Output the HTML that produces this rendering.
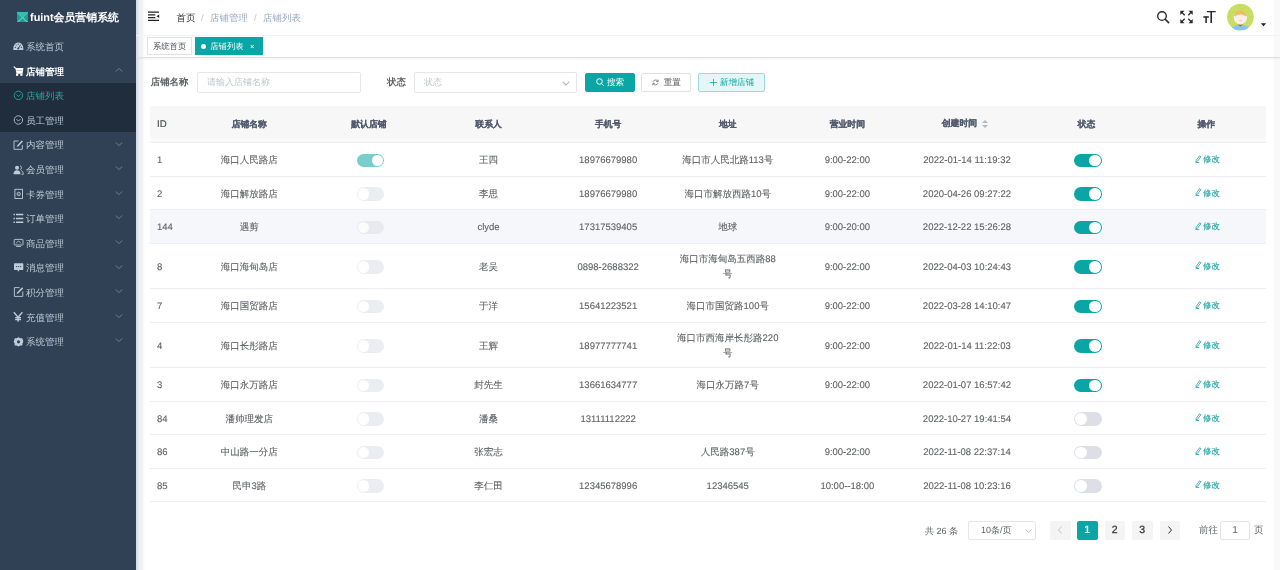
<!DOCTYPE html>
<html><head><meta charset="utf-8">
<style>
*{box-sizing:border-box;margin:0;padding:0}
body{will-change:transform}
html,body{width:1280px;height:570px;overflow:hidden;background:#fff;text-rendering:geometricPrecision;font-family:"Liberation Sans",sans-serif;font-size:9.5px;color:#606266}
.abs{position:absolute}
#side{position:absolute;left:0;top:0;width:136px;height:570px;background:#304156}
#logo{position:absolute;left:17px;top:10.5px;height:15px;color:#fff;font-weight:bold;font-size:10.9px;line-height:15px;white-space:nowrap}
#logo i{display:inline-block;width:11px;height:10.5px;background:#2aa8a0;vertical-align:-1.5px;margin-right:2px;position:relative;overflow:hidden}
.mi{position:absolute;left:0;width:136px;height:24.6px;line-height:24.6px;font-size:9.5px;white-space:nowrap}
.mi .ic{position:absolute;left:13px;top:7.3px;width:10px;height:10px;line-height:0}
.mi .tx{position:absolute;left:26px}
.mi .ar{position:absolute;left:115px;top:9px;width:8px;height:4px}
#sub{position:absolute;left:0;top:83px;width:136px;height:49px;background:#1f2d3d}
#shadow{position:absolute;left:136px;top:0;width:9px;height:570px;background:linear-gradient(90deg,#d3dbe4 0,#dfe4ea 2px,#eef0f3 3px,#f1f2f4 6px,#fff 9px)}
#nav{position:absolute;left:136px;top:0;width:1144px;height:36px;border-bottom:1px solid #f3f3f3}
#tags{position:absolute;left:136px;top:36px;width:1144px;height:22px;border-bottom:1px solid #e0e0e0;box-shadow:0 1px 2px rgba(0,0,0,.05)}
.tag{position:absolute;top:1px;height:18px;line-height:16px;border:1px solid #d8dce5;background:#fff;color:#495060;font-size:8.3px;white-space:nowrap}
.tag.on{background:#0aa6a6;border-color:#0aa6a6;color:#fff}
.tag.on .dot{display:inline-block;width:5px;height:5px;border-radius:50%;background:#fff;margin-right:4px;vertical-align:0.5px}
.bc{position:absolute;top:12.5px;line-height:12px;font-size:9.5px;white-space:nowrap}
.c{position:absolute;display:flex;align-items:center;justify-content:center;text-align:center;line-height:15px;white-space:nowrap;color:#606266}
.c .h.id{font-size:9.7px;font-weight:normal;color:#454a55}
.c .t{position:relative;top:0.8px;-webkit-text-stroke:0.1px currentColor}
.c .h{font-weight:bold;color:#515a6e;font-size:8.8px;-webkit-text-stroke:0.15px currentColor}
.sw{display:inline-block;position:relative;width:27.5px;height:13.5px;border-radius:7px;background:#dcdfe6;vertical-align:middle;left:1.5px}
.sw b{position:absolute;left:1px;top:1px;width:11.5px;height:11.5px;border-radius:50%;background:#fff}
.sw.on{background:#0aa6a6}
.sw.on b{left:15px}
.sw.dis{opacity:.55}
.ed{color:#1e9f9f;font-size:8.4px;position:relative;top:-0.6px;left:1px}
.sort{display:inline-block;position:relative;width:7px;height:9px;margin-left:5px;margin-right:3px;vertical-align:middle;top:-0.5px}
.sort i{position:absolute;left:0;width:0;height:0;border-left:3px solid transparent;border-right:3px solid transparent}
.sort .up{top:0;border-bottom:3.5px solid #b4b8bf}
.sort .dn{top:5px;border-top:3.5px solid #b4b8bf}
.lbl{position:absolute;font-weight:bold;color:#606266;line-height:12px;white-space:nowrap;font-size:9.4px}
.inp{position:absolute;height:21px;border:1px solid #e6e6e6;border-radius:2px;background:#fff;color:#c0c4cc;line-height:19px;padding-left:9px;font-size:9px;white-space:nowrap}
.btn{position:absolute;height:19px;border-radius:2px;line-height:17px;text-align:center;font-size:8.6px;white-space:nowrap;border:1px solid #e2e2e2;color:#606266;background:#fff}
.pg{position:absolute;top:521px;height:19px;width:20.5px;background:#f4f4f5;border-radius:2px;text-align:center;line-height:18px;font-weight:normal;color:#303133;font-size:10.5px;-webkit-text-stroke:0.25px #303133}
</style></head><body>
<div id="side">
  <div id="logo"><i><svg width="11" height="11" viewBox="0 0 11 11" style="position:absolute;left:0;top:0"><rect width="11" height="11" fill="#1f9e98"/><path d="M0 0L11 11M11 0L0 11" stroke="#5ccfc3" stroke-width="1.2"/><path d="M0 0h11L5.5 5.5z" fill="#3ab9b0"/></svg></i>fuint会员营销系统</div>
  <div id="sub"></div>
<svg class="abs" style="left:0;top:0" width="136" height="360" viewBox="0 0 136 360">
<!-- dashboard -->
<path d="M13.3 50.1C13 45.2 15.4 42.5 18.3 42.5S23.6 45.2 23.3 50.1Z" fill="#bfcbd9"/>
<g fill="#304156"><circle cx="15.3" cy="47.4" r="0.6"/><circle cx="16.2" cy="45" r="0.6"/><circle cx="18.3" cy="44.1" r="0.6"/><circle cx="21.3" cy="47.4" r="0.6"/><circle cx="18.3" cy="48.6" r="1"/></g>
<path d="M18.3 48.4L20.6 44.6" stroke="#304156" stroke-width="0.9"/>
<!-- cart -->
<path d="M13.8 66.6L15.7 68.4" stroke="#fff" stroke-width="1.3"/>
<path d="M15.3 68.1H23.4L22.7 73H16.4Z" fill="#fff"/>
<path d="M16.2 70.6H22.6" stroke="#304156" stroke-width="0.5" opacity="0.6"/>
<path d="M16.2 73.2H22.7V74H16.2Z" fill="#fff"/>
<rect x="16" y="74" width="2.2" height="1.8" fill="#fff"/><rect x="20.3" y="74" width="2.2" height="1.8" fill="#fff"/>
<!-- circle checks -->
<circle cx="18.4" cy="95.4" r="4.2" fill="none" stroke="#2aa9a3" stroke-width="0.85"/>
<path d="M16.4 94.5L18.4 96.5 20.4 94.5" fill="none" stroke="#2aa9a3" stroke-width="0.85"/>
<circle cx="18.4" cy="120" r="4.2" fill="none" stroke="#bfcbd9" stroke-width="0.85"/>
<path d="M16.4 119.1L18.4 121.1 20.4 119.1" fill="none" stroke="#bfcbd9" stroke-width="0.85"/>
<!-- edit -->
<path d="M18.5 141H14V149.3H22.3V145" fill="none" stroke="#bfcbd9" stroke-width="0.9"/>
<path d="M21.8 140.4L23 141.6 18.2 146.4 16.8 146.8 17.2 145.4Z" fill="#bfcbd9"/>
<!-- users -->
<circle cx="17" cy="167.7" r="2" fill="#bfcbd9"/>
<path d="M13.5 174.3C13.5 171.3 14.8 170.2 17 170.2S20.5 171.3 20.5 174.3Z" fill="#bfcbd9"/>
<path d="M20 165.8A2 2 0 0 1 20.2 169.6M21 170.4C22.4 171 23.2 172 23.2 174.3H21.5" fill="none" stroke="#bfcbd9" stroke-width="0.9"/>
<!-- card -->
<rect x="14.9" y="189.3" width="7.6" height="9.2" fill="none" stroke="#bfcbd9" stroke-width="0.9"/>
<circle cx="18.7" cy="193.9" r="1.7" fill="none" stroke="#bfcbd9" stroke-width="0.9"/>
<circle cx="18.7" cy="193.9" r="0.5" fill="#bfcbd9"/>
<!-- list -->
<path d="M13.5 214.6h1.4M13.5 218.4h1.4M13.5 222.3h1.4M16 214.6h7.3M16 218.4h7.3M16 222.3h7.3" stroke="#bfcbd9" stroke-width="1.5"/>
<!-- monitor -->
<rect x="14.2" y="239.4" width="8.8" height="5.6" rx="0.6" fill="none" stroke="#bfcbd9" stroke-width="0.9"/>
<path d="M16.5 243.3c0.5-1.5 1.3-2 2.1-2s1.6 0.5 2.1 2" fill="none" stroke="#bfcbd9" stroke-width="0.8"/>
<path d="M16.2 246.4H21" stroke="#bfcbd9" stroke-width="0.9"/>
<!-- message -->
<path d="M14.4 263.3H22.9Q23.3 263.3 23.3 263.7V269.5Q23.3 269.9 22.9 269.9H19.5L17.8 271.9V269.9H14.4Q14 269.9 14 269.5V263.7Q14 263.3 14.4 263.3Z" fill="#bfcbd9"/>
<g fill="#304156"><circle cx="16.6" cy="266.6" r="0.65"/><circle cx="18.65" cy="266.6" r="0.65"/><circle cx="20.7" cy="266.6" r="0.65"/></g>
<!-- edit2 -->
<path d="M19.5 287.6H14.4V296.4H22.8V291.5" fill="none" stroke="#bfcbd9" stroke-width="0.9"/>
<path d="M22 287.2L23.2 288.4 18.1 293.5 16.6 294 17.1 292.5Z" fill="#bfcbd9"/>
<!-- yen -->
<path d="M13.8 312.3L18.1 317.2 22.4 312.3M18.1 317V321.8M15.2 317.6H21M15.2 319.5H21" fill="none" stroke="#bfcbd9" stroke-width="1.3"/>
<!-- gear -->
<path d="M18.5 337.2L20.3 338.2 22.3 338.2 22.9 340.1 23.3 341.8 22.4 343.5 22.3 345.4 20.3 345.6 18.5 346.5 16.7 345.6 14.7 345.4 14.6 343.5 13.7 341.8 14.3 340.1 14.7 338.2 16.7 338.2Z" fill="#bfcbd9"/>
<circle cx="18.5" cy="341.8" r="1.6" fill="#304156"/>
</svg>
<div class="mi" style="top:35.9px;color:#bfcbd9;font-weight:normal"><span class="tx">系统首页</span></div>
<div class="mi" style="top:60.49999999999999px;color:#fff;font-weight:bold"><span class="tx">店铺管理</span><svg class="ar" style="top:7.8px" width="8" height="4" viewBox="0 0 8 4"><path d="M0.6 3.5L4 0.5 7.4 3.5" fill="none" stroke="#7d8a9b" stroke-width="0.8"/></svg></div>
<div class="mi" style="top:85.10000000000001px;color:#2aa9a3;font-weight:normal"><span class="tx">店铺列表</span></div>
<div class="mi" style="top:109.7px;color:#bfcbd9;font-weight:normal"><span class="tx">员工管理</span></div>
<div class="mi" style="top:134.3px;color:#bfcbd9;font-weight:normal"><span class="tx">内容管理</span><svg class="ar" style="top:7.3px" width="8" height="4" viewBox="0 0 8 4"><path d="M0.6 0.5L4 3.5 7.4 0.5" fill="none" stroke="#7d8a9b" stroke-width="0.8"/></svg></div>
<div class="mi" style="top:158.9px;color:#bfcbd9;font-weight:normal"><span class="tx">会员管理</span><svg class="ar" style="top:7.3px" width="8" height="4" viewBox="0 0 8 4"><path d="M0.6 0.5L4 3.5 7.4 0.5" fill="none" stroke="#7d8a9b" stroke-width="0.8"/></svg></div>
<div class="mi" style="top:183.5px;color:#bfcbd9;font-weight:normal"><span class="tx">卡券管理</span><svg class="ar" style="top:7.3px" width="8" height="4" viewBox="0 0 8 4"><path d="M0.6 0.5L4 3.5 7.4 0.5" fill="none" stroke="#7d8a9b" stroke-width="0.8"/></svg></div>
<div class="mi" style="top:208.1px;color:#bfcbd9;font-weight:normal"><span class="tx">订单管理</span><svg class="ar" style="top:7.3px" width="8" height="4" viewBox="0 0 8 4"><path d="M0.6 0.5L4 3.5 7.4 0.5" fill="none" stroke="#7d8a9b" stroke-width="0.8"/></svg></div>
<div class="mi" style="top:232.70000000000002px;color:#bfcbd9;font-weight:normal"><span class="tx">商品管理</span><svg class="ar" style="top:7.3px" width="8" height="4" viewBox="0 0 8 4"><path d="M0.6 0.5L4 3.5 7.4 0.5" fill="none" stroke="#7d8a9b" stroke-width="0.8"/></svg></div>
<div class="mi" style="top:257.29999999999995px;color:#bfcbd9;font-weight:normal"><span class="tx">消息管理</span><svg class="ar" style="top:7.3px" width="8" height="4" viewBox="0 0 8 4"><path d="M0.6 0.5L4 3.5 7.4 0.5" fill="none" stroke="#7d8a9b" stroke-width="0.8"/></svg></div>
<div class="mi" style="top:281.9px;color:#bfcbd9;font-weight:normal"><span class="tx">积分管理</span><svg class="ar" style="top:7.3px" width="8" height="4" viewBox="0 0 8 4"><path d="M0.6 0.5L4 3.5 7.4 0.5" fill="none" stroke="#7d8a9b" stroke-width="0.8"/></svg></div>
<div class="mi" style="top:306.5px;color:#bfcbd9;font-weight:normal"><span class="tx">充值管理</span><svg class="ar" style="top:7.3px" width="8" height="4" viewBox="0 0 8 4"><path d="M0.6 0.5L4 3.5 7.4 0.5" fill="none" stroke="#7d8a9b" stroke-width="0.8"/></svg></div>
<div class="mi" style="top:331.09999999999997px;color:#bfcbd9;font-weight:normal"><span class="tx">系统管理</span><svg class="ar" style="top:7.3px" width="8" height="4" viewBox="0 0 8 4"><path d="M0.6 0.5L4 3.5 7.4 0.5" fill="none" stroke="#7d8a9b" stroke-width="0.8"/></svg></div>
</div>
<div id="shadow"></div>
<div class="abs" style="left:1274px;top:0;width:6px;height:570px;background:#f9f9f9"></div>
<div id="nav">
  <svg class="abs" style="left:12px;top:11px" width="12" height="11" viewBox="0 0 12 11"><path d="M0 1.2h11M0 3.9h7.3M0 6.5h7.3M0 9.4h11" stroke="#222" stroke-width="1.25"/><path d="M11.2 3.6v3.3L8.6 5.25z" fill="#222"/></svg>
  <span class="bc" style="left:40.5px;color:#303133;font-weight:normal">首页</span>
  <span class="bc" style="left:65px;color:#c0c4cc">/</span>
  <span class="bc" style="left:74px;color:#97a8be">店铺管理</span>
  <span class="bc" style="left:118px;color:#c0c4cc">/</span>
  <span class="bc" style="left:127px;color:#97a8be">店铺列表</span>
  <!-- right icons -->
  <svg class="abs" style="left:-136px;top:0" width="1280" height="34" viewBox="0 0 1280 34">
    <circle cx="1162" cy="16" r="4.3" fill="none" stroke="#2b2b2b" stroke-width="1.35"/>
    <path d="M1165.2 19.2L1168.6 22.6" stroke="#2b2b2b" stroke-width="1.6" stroke-linecap="round"/>
    <g fill="#2b2b2b">
      <path d="M1180.3 10.8h4.2l-4.2 4.2z"/><path d="M1192.7 10.8h-4.2l4.2 4.2z"/>
      <path d="M1180.3 23.2h4.2l-4.2-4.2z"/><path d="M1192.7 23.2h-4.2l4.2-4.2z"/>
    </g>
    <path d="M1181.5 12l3.2 3.2M1191.5 12l-3.2 3.2M1181.5 22l3.2-3.2M1191.5 22l-3.2-3.2" stroke="#2b2b2b" stroke-width="1.3"/>
    <path d="M1206.9 11.7h8.8M1203.3 17h5.6" stroke="#2b2b2b" stroke-width="1.3"/>
    <path d="M1211.2 11.2V22.9M1206.1 16.5V22.9" stroke="#2b2b2b" stroke-width="1.6"/>
    <defs><clipPath id="av"><circle cx="1240.4" cy="17" r="13.3"/></clipPath></defs>
    <circle cx="1240.4" cy="17" r="13.3" fill="#c9dc64"/>
    <g clip-path="url(#av)">
      <path d="M1230 32c1-5 4-7 10.4-7s9.4 2 10.4 7z" fill="#86c6ea"/>
      <path d="M1238 24.5l2.4 2.2 2.4-2.2z" fill="#a8607e"/>
      <path d="M1233.6 16.5Q1234 24 1240.4 24.5Q1246.8 24 1247.2 16.5Q1244 14 1240.4 14Q1236.8 14 1233.6 16.5z" fill="#fdeeea"/>
      <path d="M1235 16.8c0-4 2-6.5 5.4-6.5s5.4 2.5 5.4 6.5c-1.4-1.6-3.2-2.6-5.4-2.6s-4 1-5.4 2.6z" fill="#f2bb62"/>
      <ellipse cx="1240.4" cy="20.5" rx="1.6" ry="0.8" fill="#f7c6cc"/>
    </g>
    <path d="M1260.8 23.3h5.4l-2.7 3z" fill="#222"/>
  </svg>
</div>
<div id="tags">
  <div class="tag" style="left:11px;width:44.5px;padding-left:5px;border-color:#e2e2e2">系统首页</div>
  <div class="tag on" style="left:59.3px;width:67.7px;padding-left:5px"><span class="dot"></span>店铺列表<span style="font-size:7.5px;position:absolute;left:53.7px;top:1px">×</span></div>
</div>
<!-- filter -->
<span class="lbl" style="left:150.8px;top:76px">店铺名称</span>
<div class="inp" style="left:197px;top:72px;width:164px">请输入店铺名称</div>
<span class="lbl" style="left:387px;top:76px">状态</span>
<div class="inp" style="left:414px;top:72px;width:163px">状态<svg class="abs" style="left:147px;top:7.5px" width="8" height="5" viewBox="0 0 8 5"><path d="M0.6 0.6L4 4 7.4 0.6" fill="none" stroke="#b4b4b4" stroke-width="1.1"/></svg></div>
<div class="btn" style="left:585px;top:73px;width:50px;background:#0aa6a6;border-color:#0aa6a6;color:#fff"><svg width="8" height="8" viewBox="0 0 8 8" style="vertical-align:-1px;margin-right:3px"><circle cx="3.5" cy="3.5" r="2.8" fill="none" stroke="#fff" stroke-width="1"/><path d="M5.5 5.5L7.5 7.5" stroke="#fff" stroke-width="1"/></svg>搜索</div>
<div class="btn" style="left:641px;top:73px;width:50px"><svg width="7" height="7" viewBox="0 0 8 8" style="vertical-align:-0.5px;margin-right:5.5px;position:relative;left:1px"><path d="M6.6 2.6A3 3 0 0 0 1.2 3.2M1.4 5.4A3 3 0 0 0 6.8 4.8" fill="none" stroke="#606266" stroke-width="0.9"/><path d="M7 0.8v2.2H4.8M1 7.2V5h2.2" fill="none" stroke="#606266" stroke-width="0.9"/></svg>重置</div>
<div class="btn" style="left:698px;top:73px;width:67px;background:#e6f6f6;border-color:#9dd9d9;color:#0aa6a6"><svg width="7" height="7" viewBox="0 0 7 7" style="vertical-align:-0.5px;margin-right:4px;position:relative;left:1px"><path d="M3.5 0v7M0 3.5h7" stroke="#0aa6a6" stroke-width="0.75"/></svg>新增店铺</div>
<div class="abs" style="left:150px;top:106px;width:1116px;height:37px;background:linear-gradient(180deg,#f7f7f7 0,#f7f7f7 31.5px,#fafafa 32px,#fafafa 36px,#ededed 36px)"></div>
<div class="c" style="left:157px;top:106px;width:32.5px;height:37px;justify-content:flex-start"><span class="h id">ID</span></div>
<div class="c" style="left:189.5px;top:106px;width:119.61111111111109px;height:37px"><span class="h">店铺名称</span></div>
<div class="c" style="left:309.1111111111111px;top:106px;width:119.61111111111114px;height:37px"><span class="h">默认店铺</span></div>
<div class="c" style="left:428.72222222222223px;top:106px;width:119.61111111111114px;height:37px"><span class="h">联系人</span></div>
<div class="c" style="left:548.3333333333334px;top:106px;width:119.61111111111109px;height:37px"><span class="h">手机号</span></div>
<div class="c" style="left:667.9444444444445px;top:106px;width:119.61111111111109px;height:37px"><span class="h">地址</span></div>
<div class="c" style="left:787.5555555555555px;top:106px;width:119.6111111111112px;height:37px"><span class="h">营业时间</span></div>
<div class="c" style="left:907.1666666666667px;top:106px;width:119.61111111111109px;height:37px"><span class="h" style="position:relative;top:-1px">创建时间</span><span class="sort"><i class="up"></i><i class="dn"></i></span></div>
<div class="c" style="left:1026.7777777777778px;top:106px;width:119.61111111111109px;height:37px"><span class="h">状态</span></div>
<div class="c" style="left:1146.388888888889px;top:106px;width:119.61111111111109px;height:37px"><span class="h">操作</span></div>
<div class="abs" style="left:150px;top:143px;width:1116px;height:33.5px;background:#fff;border-bottom:1px solid #ebeef5"></div>
<div class="c" style="left:157px;top:143px;width:32.5px;height:33.5px;justify-content:flex-start"><span class="t">1</span></div>
<div class="c" style="left:189.5px;top:143px;width:119.61111111111109px;height:33.5px"><span class="t">海口人民路店</span></div>
<div class="c" style="left:309.1111111111111px;top:143px;width:119.61111111111114px;height:33.5px"><span class="t"><span class="sw dis on"><b></b></span></span></div>
<div class="c" style="left:428.72222222222223px;top:143px;width:119.61111111111114px;height:33.5px"><span class="t">王四</span></div>
<div class="c" style="left:548.3333333333334px;top:143px;width:119.61111111111109px;height:33.5px"><span class="t">18976679980</span></div>
<div class="c" style="left:667.9444444444445px;top:143px;width:119.61111111111109px;height:33.5px"><span class="t">海口市人民北路113号</span></div>
<div class="c" style="left:787.5555555555555px;top:143px;width:119.6111111111112px;height:33.5px"><span class="t">9:00-22:00</span></div>
<div class="c" style="left:907.1666666666667px;top:143px;width:119.61111111111109px;height:33.5px"><span class="t">2022-01-14 11:19:32</span></div>
<div class="c" style="left:1026.7777777777778px;top:143px;width:119.61111111111109px;height:33.5px"><span class="t"><span class="sw on"><b></b></span></span></div>
<div class="c" style="left:1146.388888888889px;top:143px;width:119.61111111111109px;height:33.5px"><span class="t"><span class="ed"><svg width="7" height="8" viewBox="0 0 7 8" style="vertical-align:-0.5px;margin-right:1.5px"><path d="M4.6 0.8L5.9 1.7 2.4 6.4 1 6.9 1.1 5.5Z" fill="none" stroke="currentColor" stroke-width="0.8"/><path d="M0.6 7.5H4.2" stroke="currentColor" stroke-width="0.8"/></svg>修改</span></span></div>
<div class="abs" style="left:150px;top:176.5px;width:1116px;height:33.5px;background:#fff;border-bottom:1px solid #ebeef5"></div>
<div class="c" style="left:157px;top:176.5px;width:32.5px;height:33.5px;justify-content:flex-start"><span class="t">2</span></div>
<div class="c" style="left:189.5px;top:176.5px;width:119.61111111111109px;height:33.5px"><span class="t">海口解放路店</span></div>
<div class="c" style="left:309.1111111111111px;top:176.5px;width:119.61111111111114px;height:33.5px"><span class="t"><span class="sw dis"><b></b></span></span></div>
<div class="c" style="left:428.72222222222223px;top:176.5px;width:119.61111111111114px;height:33.5px"><span class="t">李思</span></div>
<div class="c" style="left:548.3333333333334px;top:176.5px;width:119.61111111111109px;height:33.5px"><span class="t">18976679980</span></div>
<div class="c" style="left:667.9444444444445px;top:176.5px;width:119.61111111111109px;height:33.5px"><span class="t">海口市解放西路10号</span></div>
<div class="c" style="left:787.5555555555555px;top:176.5px;width:119.6111111111112px;height:33.5px"><span class="t">9:00-22:00</span></div>
<div class="c" style="left:907.1666666666667px;top:176.5px;width:119.61111111111109px;height:33.5px"><span class="t">2020-04-26 09:27:22</span></div>
<div class="c" style="left:1026.7777777777778px;top:176.5px;width:119.61111111111109px;height:33.5px"><span class="t"><span class="sw on"><b></b></span></span></div>
<div class="c" style="left:1146.388888888889px;top:176.5px;width:119.61111111111109px;height:33.5px"><span class="t"><span class="ed"><svg width="7" height="8" viewBox="0 0 7 8" style="vertical-align:-0.5px;margin-right:1.5px"><path d="M4.6 0.8L5.9 1.7 2.4 6.4 1 6.9 1.1 5.5Z" fill="none" stroke="currentColor" stroke-width="0.8"/><path d="M0.6 7.5H4.2" stroke="currentColor" stroke-width="0.8"/></svg>修改</span></span></div>
<div class="abs" style="left:150px;top:210px;width:1116px;height:33.5px;background:#f5f7fa;border-bottom:1px solid #ebeef5"></div>
<div class="c" style="left:157px;top:210px;width:32.5px;height:33.5px;justify-content:flex-start"><span class="t">144</span></div>
<div class="c" style="left:189.5px;top:210px;width:119.61111111111109px;height:33.5px"><span class="t">遇剪</span></div>
<div class="c" style="left:309.1111111111111px;top:210px;width:119.61111111111114px;height:33.5px"><span class="t"><span class="sw dis"><b></b></span></span></div>
<div class="c" style="left:428.72222222222223px;top:210px;width:119.61111111111114px;height:33.5px"><span class="t">clyde</span></div>
<div class="c" style="left:548.3333333333334px;top:210px;width:119.61111111111109px;height:33.5px"><span class="t">17317539405</span></div>
<div class="c" style="left:667.9444444444445px;top:210px;width:119.61111111111109px;height:33.5px"><span class="t">地球</span></div>
<div class="c" style="left:787.5555555555555px;top:210px;width:119.6111111111112px;height:33.5px"><span class="t">9:00-20:00</span></div>
<div class="c" style="left:907.1666666666667px;top:210px;width:119.61111111111109px;height:33.5px"><span class="t">2022-12-22 15:26:28</span></div>
<div class="c" style="left:1026.7777777777778px;top:210px;width:119.61111111111109px;height:33.5px"><span class="t"><span class="sw on"><b></b></span></span></div>
<div class="c" style="left:1146.388888888889px;top:210px;width:119.61111111111109px;height:33.5px"><span class="t"><span class="ed"><svg width="7" height="8" viewBox="0 0 7 8" style="vertical-align:-0.5px;margin-right:1.5px"><path d="M4.6 0.8L5.9 1.7 2.4 6.4 1 6.9 1.1 5.5Z" fill="none" stroke="currentColor" stroke-width="0.8"/><path d="M0.6 7.5H4.2" stroke="currentColor" stroke-width="0.8"/></svg>修改</span></span></div>
<div class="abs" style="left:150px;top:243.5px;width:1116px;height:45.5px;background:#fff;border-bottom:1px solid #ebeef5"></div>
<div class="c" style="left:157px;top:243.5px;width:32.5px;height:45.5px;justify-content:flex-start"><span class="t">8</span></div>
<div class="c" style="left:189.5px;top:243.5px;width:119.61111111111109px;height:45.5px"><span class="t">海口海甸岛店</span></div>
<div class="c" style="left:309.1111111111111px;top:243.5px;width:119.61111111111114px;height:45.5px"><span class="t"><span class="sw dis"><b></b></span></span></div>
<div class="c" style="left:428.72222222222223px;top:243.5px;width:119.61111111111114px;height:45.5px"><span class="t">老吴</span></div>
<div class="c" style="left:548.3333333333334px;top:243.5px;width:119.61111111111109px;height:45.5px"><span class="t">0898-2688322</span></div>
<div class="c" style="left:667.9444444444445px;top:243.5px;width:119.61111111111109px;height:45.5px"><span class="t">海口市海甸岛五西路88<br>号</span></div>
<div class="c" style="left:787.5555555555555px;top:243.5px;width:119.6111111111112px;height:45.5px"><span class="t">9:00-22:00</span></div>
<div class="c" style="left:907.1666666666667px;top:243.5px;width:119.61111111111109px;height:45.5px"><span class="t">2022-04-03 10:24:43</span></div>
<div class="c" style="left:1026.7777777777778px;top:243.5px;width:119.61111111111109px;height:45.5px"><span class="t"><span class="sw on"><b></b></span></span></div>
<div class="c" style="left:1146.388888888889px;top:243.5px;width:119.61111111111109px;height:45.5px"><span class="t"><span class="ed"><svg width="7" height="8" viewBox="0 0 7 8" style="vertical-align:-0.5px;margin-right:1.5px"><path d="M4.6 0.8L5.9 1.7 2.4 6.4 1 6.9 1.1 5.5Z" fill="none" stroke="currentColor" stroke-width="0.8"/><path d="M0.6 7.5H4.2" stroke="currentColor" stroke-width="0.8"/></svg>修改</span></span></div>
<div class="abs" style="left:150px;top:289px;width:1116px;height:33.5px;background:#fff;border-bottom:1px solid #ebeef5"></div>
<div class="c" style="left:157px;top:289px;width:32.5px;height:33.5px;justify-content:flex-start"><span class="t">7</span></div>
<div class="c" style="left:189.5px;top:289px;width:119.61111111111109px;height:33.5px"><span class="t">海口国贸路店</span></div>
<div class="c" style="left:309.1111111111111px;top:289px;width:119.61111111111114px;height:33.5px"><span class="t"><span class="sw dis"><b></b></span></span></div>
<div class="c" style="left:428.72222222222223px;top:289px;width:119.61111111111114px;height:33.5px"><span class="t">于洋</span></div>
<div class="c" style="left:548.3333333333334px;top:289px;width:119.61111111111109px;height:33.5px"><span class="t">15641223521</span></div>
<div class="c" style="left:667.9444444444445px;top:289px;width:119.61111111111109px;height:33.5px"><span class="t">海口市国贸路100号</span></div>
<div class="c" style="left:787.5555555555555px;top:289px;width:119.6111111111112px;height:33.5px"><span class="t">9:00-22:00</span></div>
<div class="c" style="left:907.1666666666667px;top:289px;width:119.61111111111109px;height:33.5px"><span class="t">2022-03-28 14:10:47</span></div>
<div class="c" style="left:1026.7777777777778px;top:289px;width:119.61111111111109px;height:33.5px"><span class="t"><span class="sw on"><b></b></span></span></div>
<div class="c" style="left:1146.388888888889px;top:289px;width:119.61111111111109px;height:33.5px"><span class="t"><span class="ed"><svg width="7" height="8" viewBox="0 0 7 8" style="vertical-align:-0.5px;margin-right:1.5px"><path d="M4.6 0.8L5.9 1.7 2.4 6.4 1 6.9 1.1 5.5Z" fill="none" stroke="currentColor" stroke-width="0.8"/><path d="M0.6 7.5H4.2" stroke="currentColor" stroke-width="0.8"/></svg>修改</span></span></div>
<div class="abs" style="left:150px;top:322.5px;width:1116px;height:45.5px;background:#fff;border-bottom:1px solid #ebeef5"></div>
<div class="c" style="left:157px;top:322.5px;width:32.5px;height:45.5px;justify-content:flex-start"><span class="t">4</span></div>
<div class="c" style="left:189.5px;top:322.5px;width:119.61111111111109px;height:45.5px"><span class="t">海口长彤路店</span></div>
<div class="c" style="left:309.1111111111111px;top:322.5px;width:119.61111111111114px;height:45.5px"><span class="t"><span class="sw dis"><b></b></span></span></div>
<div class="c" style="left:428.72222222222223px;top:322.5px;width:119.61111111111114px;height:45.5px"><span class="t">王辉</span></div>
<div class="c" style="left:548.3333333333334px;top:322.5px;width:119.61111111111109px;height:45.5px"><span class="t">18977777741</span></div>
<div class="c" style="left:667.9444444444445px;top:322.5px;width:119.61111111111109px;height:45.5px"><span class="t">海口市西海岸长彤路220<br>号</span></div>
<div class="c" style="left:787.5555555555555px;top:322.5px;width:119.6111111111112px;height:45.5px"><span class="t">9:00-22:00</span></div>
<div class="c" style="left:907.1666666666667px;top:322.5px;width:119.61111111111109px;height:45.5px"><span class="t">2022-01-14 11:22:03</span></div>
<div class="c" style="left:1026.7777777777778px;top:322.5px;width:119.61111111111109px;height:45.5px"><span class="t"><span class="sw on"><b></b></span></span></div>
<div class="c" style="left:1146.388888888889px;top:322.5px;width:119.61111111111109px;height:45.5px"><span class="t"><span class="ed"><svg width="7" height="8" viewBox="0 0 7 8" style="vertical-align:-0.5px;margin-right:1.5px"><path d="M4.6 0.8L5.9 1.7 2.4 6.4 1 6.9 1.1 5.5Z" fill="none" stroke="currentColor" stroke-width="0.8"/><path d="M0.6 7.5H4.2" stroke="currentColor" stroke-width="0.8"/></svg>修改</span></span></div>
<div class="abs" style="left:150px;top:368px;width:1116px;height:33.5px;background:#fff;border-bottom:1px solid #ebeef5"></div>
<div class="c" style="left:157px;top:368px;width:32.5px;height:33.5px;justify-content:flex-start"><span class="t">3</span></div>
<div class="c" style="left:189.5px;top:368px;width:119.61111111111109px;height:33.5px"><span class="t">海口永万路店</span></div>
<div class="c" style="left:309.1111111111111px;top:368px;width:119.61111111111114px;height:33.5px"><span class="t"><span class="sw dis"><b></b></span></span></div>
<div class="c" style="left:428.72222222222223px;top:368px;width:119.61111111111114px;height:33.5px"><span class="t">封先生</span></div>
<div class="c" style="left:548.3333333333334px;top:368px;width:119.61111111111109px;height:33.5px"><span class="t">13661634777</span></div>
<div class="c" style="left:667.9444444444445px;top:368px;width:119.61111111111109px;height:33.5px"><span class="t">海口永万路7号</span></div>
<div class="c" style="left:787.5555555555555px;top:368px;width:119.6111111111112px;height:33.5px"><span class="t">9:00-22:00</span></div>
<div class="c" style="left:907.1666666666667px;top:368px;width:119.61111111111109px;height:33.5px"><span class="t">2022-01-07 16:57:42</span></div>
<div class="c" style="left:1026.7777777777778px;top:368px;width:119.61111111111109px;height:33.5px"><span class="t"><span class="sw on"><b></b></span></span></div>
<div class="c" style="left:1146.388888888889px;top:368px;width:119.61111111111109px;height:33.5px"><span class="t"><span class="ed"><svg width="7" height="8" viewBox="0 0 7 8" style="vertical-align:-0.5px;margin-right:1.5px"><path d="M4.6 0.8L5.9 1.7 2.4 6.4 1 6.9 1.1 5.5Z" fill="none" stroke="currentColor" stroke-width="0.8"/><path d="M0.6 7.5H4.2" stroke="currentColor" stroke-width="0.8"/></svg>修改</span></span></div>
<div class="abs" style="left:150px;top:401.5px;width:1116px;height:33.5px;background:#fff;border-bottom:1px solid #ebeef5"></div>
<div class="c" style="left:157px;top:401.5px;width:32.5px;height:33.5px;justify-content:flex-start"><span class="t">84</span></div>
<div class="c" style="left:189.5px;top:401.5px;width:119.61111111111109px;height:33.5px"><span class="t">潘帅理发店</span></div>
<div class="c" style="left:309.1111111111111px;top:401.5px;width:119.61111111111114px;height:33.5px"><span class="t"><span class="sw dis"><b></b></span></span></div>
<div class="c" style="left:428.72222222222223px;top:401.5px;width:119.61111111111114px;height:33.5px"><span class="t">潘桑</span></div>
<div class="c" style="left:548.3333333333334px;top:401.5px;width:119.61111111111109px;height:33.5px"><span class="t">13111112222</span></div>
<div class="c" style="left:667.9444444444445px;top:401.5px;width:119.61111111111109px;height:33.5px"><span class="t"></span></div>
<div class="c" style="left:787.5555555555555px;top:401.5px;width:119.6111111111112px;height:33.5px"><span class="t"></span></div>
<div class="c" style="left:907.1666666666667px;top:401.5px;width:119.61111111111109px;height:33.5px"><span class="t">2022-10-27 19:41:54</span></div>
<div class="c" style="left:1026.7777777777778px;top:401.5px;width:119.61111111111109px;height:33.5px"><span class="t"><span class="sw"><b></b></span></span></div>
<div class="c" style="left:1146.388888888889px;top:401.5px;width:119.61111111111109px;height:33.5px"><span class="t"><span class="ed"><svg width="7" height="8" viewBox="0 0 7 8" style="vertical-align:-0.5px;margin-right:1.5px"><path d="M4.6 0.8L5.9 1.7 2.4 6.4 1 6.9 1.1 5.5Z" fill="none" stroke="currentColor" stroke-width="0.8"/><path d="M0.6 7.5H4.2" stroke="currentColor" stroke-width="0.8"/></svg>修改</span></span></div>
<div class="abs" style="left:150px;top:435px;width:1116px;height:33.5px;background:#fff;border-bottom:1px solid #ebeef5"></div>
<div class="c" style="left:157px;top:435px;width:32.5px;height:33.5px;justify-content:flex-start"><span class="t">86</span></div>
<div class="c" style="left:189.5px;top:435px;width:119.61111111111109px;height:33.5px"><span class="t">中山路一分店</span></div>
<div class="c" style="left:309.1111111111111px;top:435px;width:119.61111111111114px;height:33.5px"><span class="t"><span class="sw dis"><b></b></span></span></div>
<div class="c" style="left:428.72222222222223px;top:435px;width:119.61111111111114px;height:33.5px"><span class="t">张宏志</span></div>
<div class="c" style="left:548.3333333333334px;top:435px;width:119.61111111111109px;height:33.5px"><span class="t"></span></div>
<div class="c" style="left:667.9444444444445px;top:435px;width:119.61111111111109px;height:33.5px"><span class="t">人民路387号</span></div>
<div class="c" style="left:787.5555555555555px;top:435px;width:119.6111111111112px;height:33.5px"><span class="t">9:00-22:00</span></div>
<div class="c" style="left:907.1666666666667px;top:435px;width:119.61111111111109px;height:33.5px"><span class="t">2022-11-08 22:37:14</span></div>
<div class="c" style="left:1026.7777777777778px;top:435px;width:119.61111111111109px;height:33.5px"><span class="t"><span class="sw"><b></b></span></span></div>
<div class="c" style="left:1146.388888888889px;top:435px;width:119.61111111111109px;height:33.5px"><span class="t"><span class="ed"><svg width="7" height="8" viewBox="0 0 7 8" style="vertical-align:-0.5px;margin-right:1.5px"><path d="M4.6 0.8L5.9 1.7 2.4 6.4 1 6.9 1.1 5.5Z" fill="none" stroke="currentColor" stroke-width="0.8"/><path d="M0.6 7.5H4.2" stroke="currentColor" stroke-width="0.8"/></svg>修改</span></span></div>
<div class="abs" style="left:150px;top:468.5px;width:1116px;height:33.5px;background:#fff;border-bottom:1px solid #ebeef5"></div>
<div class="c" style="left:157px;top:468.5px;width:32.5px;height:33.5px;justify-content:flex-start"><span class="t">85</span></div>
<div class="c" style="left:189.5px;top:468.5px;width:119.61111111111109px;height:33.5px"><span class="t">民申3路</span></div>
<div class="c" style="left:309.1111111111111px;top:468.5px;width:119.61111111111114px;height:33.5px"><span class="t"><span class="sw dis"><b></b></span></span></div>
<div class="c" style="left:428.72222222222223px;top:468.5px;width:119.61111111111114px;height:33.5px"><span class="t">李仁田</span></div>
<div class="c" style="left:548.3333333333334px;top:468.5px;width:119.61111111111109px;height:33.5px"><span class="t">12345678996</span></div>
<div class="c" style="left:667.9444444444445px;top:468.5px;width:119.61111111111109px;height:33.5px"><span class="t">12346545</span></div>
<div class="c" style="left:787.5555555555555px;top:468.5px;width:119.6111111111112px;height:33.5px"><span class="t">10:00--18:00</span></div>
<div class="c" style="left:907.1666666666667px;top:468.5px;width:119.61111111111109px;height:33.5px"><span class="t">2022-11-08 10:23:16</span></div>
<div class="c" style="left:1026.7777777777778px;top:468.5px;width:119.61111111111109px;height:33.5px"><span class="t"><span class="sw"><b></b></span></span></div>
<div class="c" style="left:1146.388888888889px;top:468.5px;width:119.61111111111109px;height:33.5px"><span class="t"><span class="ed"><svg width="7" height="8" viewBox="0 0 7 8" style="vertical-align:-0.5px;margin-right:1.5px"><path d="M4.6 0.8L5.9 1.7 2.4 6.4 1 6.9 1.1 5.5Z" fill="none" stroke="currentColor" stroke-width="0.8"/><path d="M0.6 7.5H4.2" stroke="currentColor" stroke-width="0.8"/></svg>修改</span></span></div>
<!-- pagination -->
<span class="abs" style="left:925px;top:525px;line-height:12px;white-space:nowrap;font-size:9px">共 26 条</span>
<div class="inp" style="left:968px;top:521px;width:68px;height:19px;line-height:17px;color:#606266;padding-left:12px">10条/页<svg class="abs" style="left:55.5px;top:6.5px" width="7" height="4" viewBox="0 0 7 4"><path d="M0.5 0.5L3.5 3.3 6.5 0.5" fill="none" stroke="#bbb" stroke-width="1"/></svg></div>
<div class="pg" style="left:1050px;color:#c0c4cc"><svg width="6" height="8" viewBox="0 0 6 8" style="vertical-align:-0.5px"><path d="M4.5 0.5L1.5 4l3 3.5" fill="none" stroke="#c0c4cc" stroke-width="1"/></svg></div>
<div class="pg" style="left:1077px;background:#0aa6a6;color:#fff;font-weight:bold;-webkit-text-stroke:0">1</div>
<div class="pg" style="left:1104.5px">2</div>
<div class="pg" style="left:1132px">3</div>
<div class="pg" style="left:1159.5px"><svg width="6" height="8" viewBox="0 0 6 8" style="vertical-align:-0.5px"><path d="M1.5 0.5L4.5 4l-3 3.5" fill="none" stroke="#303133" stroke-width="1"/></svg></div>
<span class="abs" style="left:1199px;top:525px;line-height:12px">前往</span>
<div class="inp" style="left:1220px;top:521px;width:30px;height:19px;line-height:17px;color:#606266;padding:0;text-align:center;font-size:10px">1</div>
<span class="abs" style="left:1254px;top:525px;line-height:12px">页</span>
</body></html>
